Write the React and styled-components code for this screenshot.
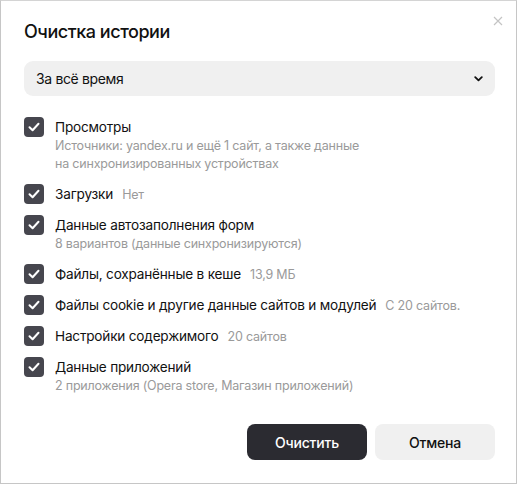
import React, { useState } from 'react'
import styled, { createGlobalStyle } from 'styled-components'

const GlobalStyle = createGlobalStyle`
  html, body {
    margin: 0;
    padding: 0;
    background: #ffffff;
  }
  body {
    font-family: Inter, 'Noto Sans', sans-serif;
    color: #000;
  }
`

const Dialog = styled.div`
  position: relative;
  width: 517px;
  height: 484px;
  box-sizing: border-box;
  border: 1px solid #c6c6c6;
  border-top-color: #d4d4d4;
  background: #fff;
  padding: 19px 21px 0 23px;
  display: flex;
  flex-direction: column;
`

const Title = styled.h1`
  margin: 0;
  font-size: 18px;
  line-height: 24px;
  font-weight: 500;
  color: #111;
  letter-spacing: -0.45px;
`

// крестик в правом верхнем углу
const Close = styled.button`
  position: absolute;
  top: 12px;
  right: 10px;
  width: 16px;
  height: 16px;
  padding: 0;
  border: none;
  background: none;
  cursor: pointer;
  display: flex;
  align-items: center;
  justify-content: center;
`

const Select = styled.div`
  margin-top: 17px;
  height: 35px;
  border-radius: 9px;
  background: #f0f0f0;
  display: flex;
  align-items: center;
  justify-content: space-between;
  padding: 0 12px 0 12px;
  font-size: 14px;
  letter-spacing: -0.35px;
  color: #111;
  cursor: pointer;
`

const List = styled.div`
  margin-top: 21px;
  display: flex;
  flex-direction: column;
  gap: 11px;
`

const Item = styled.label`
  display: flex;
  align-items: flex-start;
  gap: 11px;
  cursor: pointer;
`

const Box = styled.span`
  flex: none;
  width: 20px;
  height: 20px;
  border-radius: 4px;
  background: ${p => (p.$checked ? '#46464e' : '#fff')};
  border: ${p => (p.$checked ? 'none' : '1px solid #aaa')};
  box-sizing: border-box;
  display: flex;
  align-items: center;
  justify-content: center;
`

const Texts = styled.div`
  display: flex;
  flex-direction: column;
`

const Label = styled.div`
  height: 20px;
  font-size: 13.6px;
  line-height: 20px;
  letter-spacing: -0.2px;
  color: #111;
  white-space: nowrap;
`

const Hint = styled.span`
  margin-left: 9px;
  font-size: 12.5px;
  line-height: 1;
  letter-spacing: -0.2px;
  color: #9a9a9a;
`

const Sub = styled.div`
  font-size: 12.5px;
  line-height: 18px;
  letter-spacing: -0.2px;
  color: #9a9a9a;
  max-width: 310px;
`

const Footer = styled.div`
  margin-top: auto;
  margin-bottom: 23px;
  display: flex;
  justify-content: flex-end;
  gap: 8px;
`

const Button = styled.button`
  width: 120px;
  height: 36px;
  border: none;
  border-radius: 8px;
  font-family: inherit;
  font-size: 14px;
  font-weight: 500;
  letter-spacing: -0.2px;
  cursor: pointer;
  background: ${p => (p.$primary ? '#2b2b31' : '#f0f0f0')};
  color: ${p => (p.$primary ? '#fff' : '#111')};
`

const items = [
  {
    id: 'views',
    title: 'Просмотры',
    sub: 'Источники: yandex.ru и ещё 1 сайт, а также данные на синхронизированных устройствах',
  },
  { id: 'downloads', title: 'Загрузки', hint: 'Нет' },
  { id: 'forms', title: 'Данные автозаполнения форм', sub: '8 вариантов (данные синхронизируются)' },
  { id: 'cache', title: 'Файлы, сохранённые в кеше', hint: '13,9 МБ' },
  { id: 'cookies', title: 'Файлы cookie и другие данные сайтов и модулей', hint: 'С 20 сайтов.' },
  { id: 'settings', title: 'Настройки содержимого', hint: '20 сайтов' },
  { id: 'apps', title: 'Данные приложений', sub: '2 приложения (Opera store, Магазин приложений)' },
]

function Check() {
  return (
    <svg width="12" height="10" viewBox="0 0 12 10" fill="none">
      <path d="M1.5 5.2 L4.6 8.2 L10.5 1.8" stroke="#fff" strokeWidth="2" strokeLinecap="round" strokeLinejoin="round" />
    </svg>
  )
}

function App() {
  const [checked, setChecked] = useState(() => Object.fromEntries(items.map(i => [i.id, true])))

  const toggle = id => setChecked(prev => ({ ...prev, [id]: !prev[id] }))

  return (
    <>
      <GlobalStyle />
      <Dialog>
        <Close aria-label="Закрыть">
          <svg width="10" height="10" viewBox="0 0 10 10">
            <path d="M1 1 L9 9 M9 1 L1 9" stroke="#c4c4c4" strokeWidth="1.2" />
          </svg>
        </Close>

        <Title>Очистка истории</Title>

        <Select>
          <span>За всё время</span>
          <svg width="9" height="6" viewBox="0 0 9 6">
            <path d="M1.2 1.2 L4.5 4.4 L7.8 1.2" stroke="#111" strokeWidth="1.8" fill="none" strokeLinecap="round" strokeLinejoin="round" />
          </svg>
        </Select>

        <List>
          {items.map(item => (
            <Item key={item.id} onClick={() => toggle(item.id)}>
              <Box $checked={checked[item.id]}>{checked[item.id] && <Check />}</Box>
              <Texts>
                <Label>
                  {item.title}
                  {item.hint && <Hint>{item.hint}</Hint>}
                </Label>
                {item.sub && <Sub>{item.sub}</Sub>}
              </Texts>
            </Item>
          ))}
        </List>

        <Footer>
          <Button $primary>Очистить</Button>
          <Button>Отмена</Button>
        </Footer>
      </Dialog>
    </>
  )
}

export default App
